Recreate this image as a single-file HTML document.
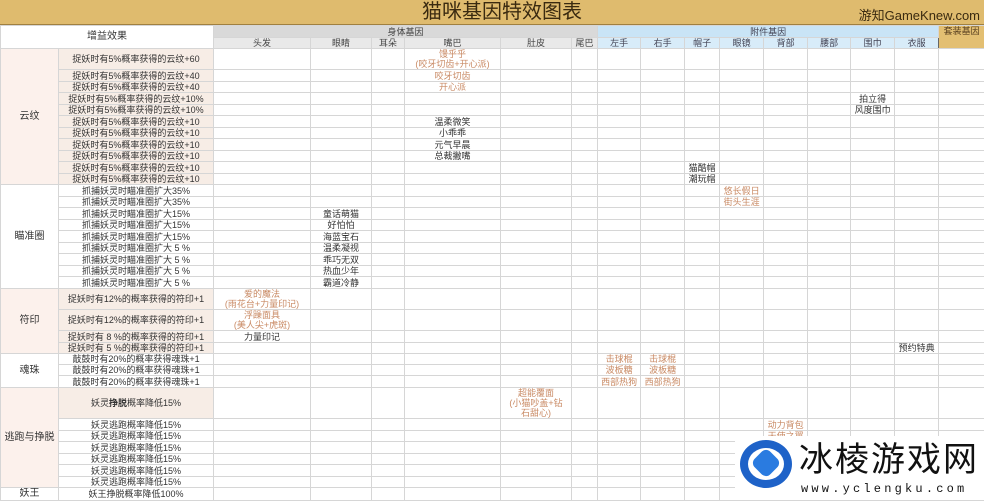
<!DOCTYPE html>
<html><head><meta charset="utf-8">
<style>
*{margin:0;padding:0;box-sizing:border-box}
body{width:984px;height:500px;overflow:hidden;background:#fff;font-family:"Liberation Sans","Noto Sans CJK SC",sans-serif;position:relative}
#title{position:absolute;left:0;top:0;width:984px;height:25px;background:#dfbb6e;border-bottom:1px solid #a08040}
#title .t{position:absolute;left:422px;top:0;font-size:20px;line-height:25px;color:#3a2a10}
#title .s{position:absolute;right:4px;top:5px;font-size:13px;color:#3a2a10}
table{position:absolute;left:0;top:25px;border-collapse:collapse;table-layout:fixed;width:984px}
td{border:1px solid #d6d6d6;font-size:9px;line-height:10px;text-align:center;white-space:nowrap;overflow:hidden;color:#333;padding:0}
.h1{background:#d9d9d9;color:#444}
.h2{background:#e9e9e9;color:#444}
.b1{background:#c9e4f6;color:#445}
.b2{background:#d8ecf9;color:#445}
.g{background:#e3bf72;color:#5a4020;vertical-align:top}
.pk{background:#fcf1ec}
.pe{background:#f7ede6}
.o{color:#c98a64}
.L{border-left:1px solid #666}
.T td{border-top:1px solid #666}
.lbl{font-size:10px}
#wm{position:absolute;left:735px;top:436px;width:249px;height:64px;background:#fff;border-radius:6px 0 0 0}
#wm .c{position:absolute;left:5px;top:4px;width:52px;height:48px;border-radius:50%;border:8px solid #1e62c8;}
#wm .c2{position:absolute;left:20px;top:16px;width:22px;height:22px;background:#2a7be0;border-radius:6px;transform:rotate(45deg)}
#wm .n{position:absolute;left:64px;top:5px;font-size:34px;line-height:38px;color:#111;letter-spacing:2px}
#wm .u{position:absolute;left:66px;top:46px;font-size:12px;color:#111;letter-spacing:3.2px;font-family:"Liberation Mono",monospace}
</style></head><body>
<div id="title"><span class="t">猫咪基因特效图表</span><span class="s">游知GameKnew.com</span></div>
<table>
<colgroup>
<col style="width:58px"><col style="width:155px"><col style="width:97px"><col style="width:61px"><col style="width:33px"><col style="width:96px"><col style="width:71px"><col style="width:26px"><col style="width:43px"><col style="width:44px"><col style="width:35px"><col style="width:44px"><col style="width:44px"><col style="width:43px"><col style="width:44px"><col style="width:44px"><col style="width:46px">
</colgroup>
<tr style="height:12px"><td colspan="2" rowspan="2" class="lbl">增益效果</td><td colspan="6" class="h1 L">身体基因</td><td colspan="8" class="b1 L">附件基因</td><td rowspan="2" class="g L">套装基因</td></tr>
<tr style="height:11px"><td class="h2 L">头发</td><td class="h2">眼睛</td><td class="h2">耳朵</td><td class="h2">嘴巴</td><td class="h2">肚皮</td><td class="h2">尾巴</td><td class="b2 L">左手</td><td class="b2">右手</td><td class="b2">帽子</td><td class="b2">眼镜</td><td class="b2">背部</td><td class="b2">腰部</td><td class="b2">围巾</td><td class="b2">衣服</td></tr>

<tr class="T" style="height:21px"><td rowspan="11" class="pk lbl">云纹</td><td class="pe">捉妖时有5%概率获得的云纹+60</td><td class="L"></td><td></td><td></td><td class="o">馒乎乎<br>(咬牙切齿+开心派)</td><td></td><td></td><td class="L"></td><td></td><td></td><td></td><td></td><td></td><td></td><td></td><td class="L"></td></tr>
<tr style="height:12px"><td class="pe">捉妖时有5%概率获得的云纹+40</td><td class="L"></td><td></td><td></td><td class="o">咬牙切齿</td><td></td><td></td><td class="L"></td><td></td><td></td><td></td><td></td><td></td><td></td><td></td><td class="L"></td></tr>
<tr style="height:11px"><td class="pe">捉妖时有5%概率获得的云纹+40</td><td class="L"></td><td></td><td></td><td class="o">开心派</td><td></td><td></td><td class="L"></td><td></td><td></td><td></td><td></td><td></td><td></td><td></td><td class="L"></td></tr>
<tr style="height:12px"><td class="pe">捉妖时有5%概率获得的云纹+10%</td><td class="L"></td><td></td><td></td><td></td><td></td><td></td><td class="L"></td><td></td><td></td><td></td><td></td><td></td><td>拍立得</td><td></td><td class="L"></td></tr>
<tr style="height:11px"><td class="pe">捉妖时有5%概率获得的云纹+10%</td><td class="L"></td><td></td><td></td><td></td><td></td><td></td><td class="L"></td><td></td><td></td><td></td><td></td><td></td><td>风度围巾</td><td></td><td class="L"></td></tr>
<tr style="height:12px"><td class="pe">捉妖时有5%概率获得的云纹+10</td><td class="L"></td><td></td><td></td><td>温柔微笑</td><td></td><td></td><td class="L"></td><td></td><td></td><td></td><td></td><td></td><td></td><td></td><td class="L"></td></tr>
<tr style="height:11px"><td class="pe">捉妖时有5%概率获得的云纹+10</td><td class="L"></td><td></td><td></td><td>小乖乖</td><td></td><td></td><td class="L"></td><td></td><td></td><td></td><td></td><td></td><td></td><td></td><td class="L"></td></tr>
<tr style="height:12px"><td class="pe">捉妖时有5%概率获得的云纹+10</td><td class="L"></td><td></td><td></td><td>元气早晨</td><td></td><td></td><td class="L"></td><td></td><td></td><td></td><td></td><td></td><td></td><td></td><td class="L"></td></tr>
<tr style="height:11px"><td class="pe">捉妖时有5%概率获得的云纹+10</td><td class="L"></td><td></td><td></td><td>总裁撇嘴</td><td></td><td></td><td class="L"></td><td></td><td></td><td></td><td></td><td></td><td></td><td></td><td class="L"></td></tr>
<tr style="height:12px"><td class="pe">捉妖时有5%概率获得的云纹+10</td><td class="L"></td><td></td><td></td><td></td><td></td><td></td><td class="L"></td><td></td><td>猫酷帽</td><td></td><td></td><td></td><td></td><td></td><td class="L"></td></tr>
<tr style="height:11px"><td class="pe">捉妖时有5%概率获得的云纹+10</td><td class="L"></td><td></td><td></td><td></td><td></td><td></td><td class="L"></td><td></td><td>潮玩帽</td><td></td><td></td><td></td><td></td><td></td><td class="L"></td></tr>

<tr class="T" style="height:12px"><td rowspan="9" class="lbl">瞄准圈</td><td>抓捕妖灵时瞄准圈扩大35%</td><td class="L"></td><td></td><td></td><td></td><td></td><td></td><td class="L"></td><td></td><td></td><td class="o">悠长假日</td><td></td><td></td><td></td><td></td><td class="L"></td></tr>
<tr style="height:11px"><td>抓捕妖灵时瞄准圈扩大35%</td><td class="L"></td><td></td><td></td><td></td><td></td><td></td><td class="L"></td><td></td><td></td><td class="o">街头生涯</td><td></td><td></td><td></td><td></td><td class="L"></td></tr>
<tr style="height:12px"><td>抓捕妖灵时瞄准圈扩大15%</td><td class="L"></td><td>童话萌猫</td><td></td><td></td><td></td><td></td><td class="L"></td><td></td><td></td><td></td><td></td><td></td><td></td><td></td><td class="L"></td></tr>
<tr style="height:11px"><td>抓捕妖灵时瞄准圈扩大15%</td><td class="L"></td><td>好怕怕</td><td></td><td></td><td></td><td></td><td class="L"></td><td></td><td></td><td></td><td></td><td></td><td></td><td></td><td class="L"></td></tr>
<tr style="height:12px"><td>抓捕妖灵时瞄准圈扩大15%</td><td class="L"></td><td>海蓝宝石</td><td></td><td></td><td></td><td></td><td class="L"></td><td></td><td></td><td></td><td></td><td></td><td></td><td></td><td class="L"></td></tr>
<tr style="height:11px"><td>抓捕妖灵时瞄准圈扩大 5 %</td><td class="L"></td><td>温柔凝视</td><td></td><td></td><td></td><td></td><td class="L"></td><td></td><td></td><td></td><td></td><td></td><td></td><td></td><td class="L"></td></tr>
<tr style="height:12px"><td>抓捕妖灵时瞄准圈扩大 5 %</td><td class="L"></td><td>乖巧无双</td><td></td><td></td><td></td><td></td><td class="L"></td><td></td><td></td><td></td><td></td><td></td><td></td><td></td><td class="L"></td></tr>
<tr style="height:11px"><td>抓捕妖灵时瞄准圈扩大 5 %</td><td class="L"></td><td>热血少年</td><td></td><td></td><td></td><td></td><td class="L"></td><td></td><td></td><td></td><td></td><td></td><td></td><td></td><td class="L"></td></tr>
<tr style="height:12px"><td>抓捕妖灵时瞄准圈扩大 5 %</td><td class="L"></td><td>霸道冷静</td><td></td><td></td><td></td><td></td><td class="L"></td><td></td><td></td><td></td><td></td><td></td><td></td><td></td><td class="L"></td></tr>

<tr class="T" style="height:21px"><td rowspan="4" class="pk lbl">符印</td><td class="pe">捉妖时有12%的概率获得的符印+1</td><td class="L o">爱的魔法<br>(雨花台+力量印记)</td><td></td><td></td><td></td><td></td><td></td><td class="L"></td><td></td><td></td><td></td><td></td><td></td><td></td><td></td><td class="L"></td></tr>
<tr style="height:21px"><td class="pe">捉妖时有12%的概率获得的符印+1</td><td class="L o">浮躁面具<br>(美人尖+虎斑)</td><td></td><td></td><td></td><td></td><td></td><td class="L"></td><td></td><td></td><td></td><td></td><td></td><td></td><td></td><td class="L"></td></tr>
<tr style="height:12px"><td class="pe">捉妖时有 8 %的概率获得的符印+1</td><td class="L">力量印记</td><td></td><td></td><td></td><td></td><td></td><td class="L"></td><td></td><td></td><td></td><td></td><td></td><td></td><td></td><td class="L"></td></tr>
<tr style="height:11px"><td class="pe">捉妖时有 5 %的概率获得的符印+1</td><td class="L"></td><td></td><td></td><td></td><td></td><td></td><td class="L"></td><td></td><td></td><td></td><td></td><td></td><td></td><td>预约特典</td><td class="L"></td></tr>

<tr class="T" style="height:11px"><td rowspan="3" class="lbl">魂珠</td><td>敲鼓时有20%的概率获得魂珠+1</td><td class="L"></td><td></td><td></td><td></td><td></td><td></td><td class="L o">击球棍</td><td class="o">击球棍</td><td></td><td></td><td></td><td></td><td></td><td></td><td class="L"></td></tr>
<tr style="height:11px"><td>敲鼓时有20%的概率获得魂珠+1</td><td class="L"></td><td></td><td></td><td></td><td></td><td></td><td class="L o">波板糖</td><td class="o">波板糖</td><td></td><td></td><td></td><td></td><td></td><td></td><td class="L"></td></tr>
<tr style="height:12px"><td>敲鼓时有20%的概率获得魂珠+1</td><td class="L"></td><td></td><td></td><td></td><td></td><td></td><td class="L o">西部热狗</td><td class="o">西部热狗</td><td></td><td></td><td></td><td></td><td></td><td></td><td class="L"></td></tr>

<tr class="T" style="height:31px"><td rowspan="7" class="pk lbl">逃跑与挣脱</td><td class="pe">妖灵<b>挣脱</b>概率降低15%</td><td class="L"></td><td></td><td></td><td></td><td class="o" style="vertical-align:top">超能覆面<br>(小猫吵盖+钻<br>石甜心)</td><td></td><td class="L"></td><td></td><td></td><td></td><td></td><td></td><td></td><td></td><td class="L"></td></tr>
<tr style="height:12px"><td>妖灵逃跑概率降低15%</td><td class="L"></td><td></td><td></td><td></td><td></td><td></td><td class="L"></td><td></td><td></td><td></td><td class="o">动力背包</td><td></td><td></td><td></td><td class="L"></td></tr>
<tr style="height:11px"><td>妖灵逃跑概率降低15%</td><td class="L"></td><td></td><td></td><td></td><td></td><td></td><td class="L"></td><td></td><td></td><td></td><td class="o">天使之翼</td><td></td><td></td><td></td><td class="L"></td></tr>
<tr style="height:12px"><td>妖灵逃跑概率降低15%</td><td class="L"></td><td></td><td></td><td></td><td></td><td></td><td class="L"></td><td></td><td></td><td></td><td></td><td></td><td></td><td></td><td class="L"></td></tr>
<tr style="height:11px"><td>妖灵逃跑概率降低15%</td><td class="L"></td><td></td><td></td><td></td><td></td><td></td><td class="L"></td><td></td><td></td><td></td><td></td><td></td><td></td><td></td><td class="L"></td></tr>
<tr style="height:12px"><td>妖灵逃跑概率降低15%</td><td class="L"></td><td></td><td></td><td></td><td></td><td></td><td class="L"></td><td></td><td></td><td></td><td></td><td></td><td></td><td></td><td class="L"></td></tr>
<tr style="height:11px"><td>妖灵逃跑概率降低15%</td><td class="L"></td><td></td><td></td><td></td><td></td><td></td><td class="L"></td><td></td><td></td><td></td><td></td><td></td><td></td><td></td><td class="L"></td></tr>

<tr class="T" style="height:13px"><td class="lbl">妖王</td><td>妖王挣脱概率降低100%</td><td class="L"></td><td></td><td></td><td></td><td></td><td></td><td class="L"></td><td></td><td></td><td></td><td></td><td></td><td></td><td></td><td class="L"></td></tr>
</table>
<div id="wm"><div class="c"></div><div class="c2"></div><div class="n">冰棱游戏网</div><div class="u">www.yclengku.com</div></div>
</body></html>
